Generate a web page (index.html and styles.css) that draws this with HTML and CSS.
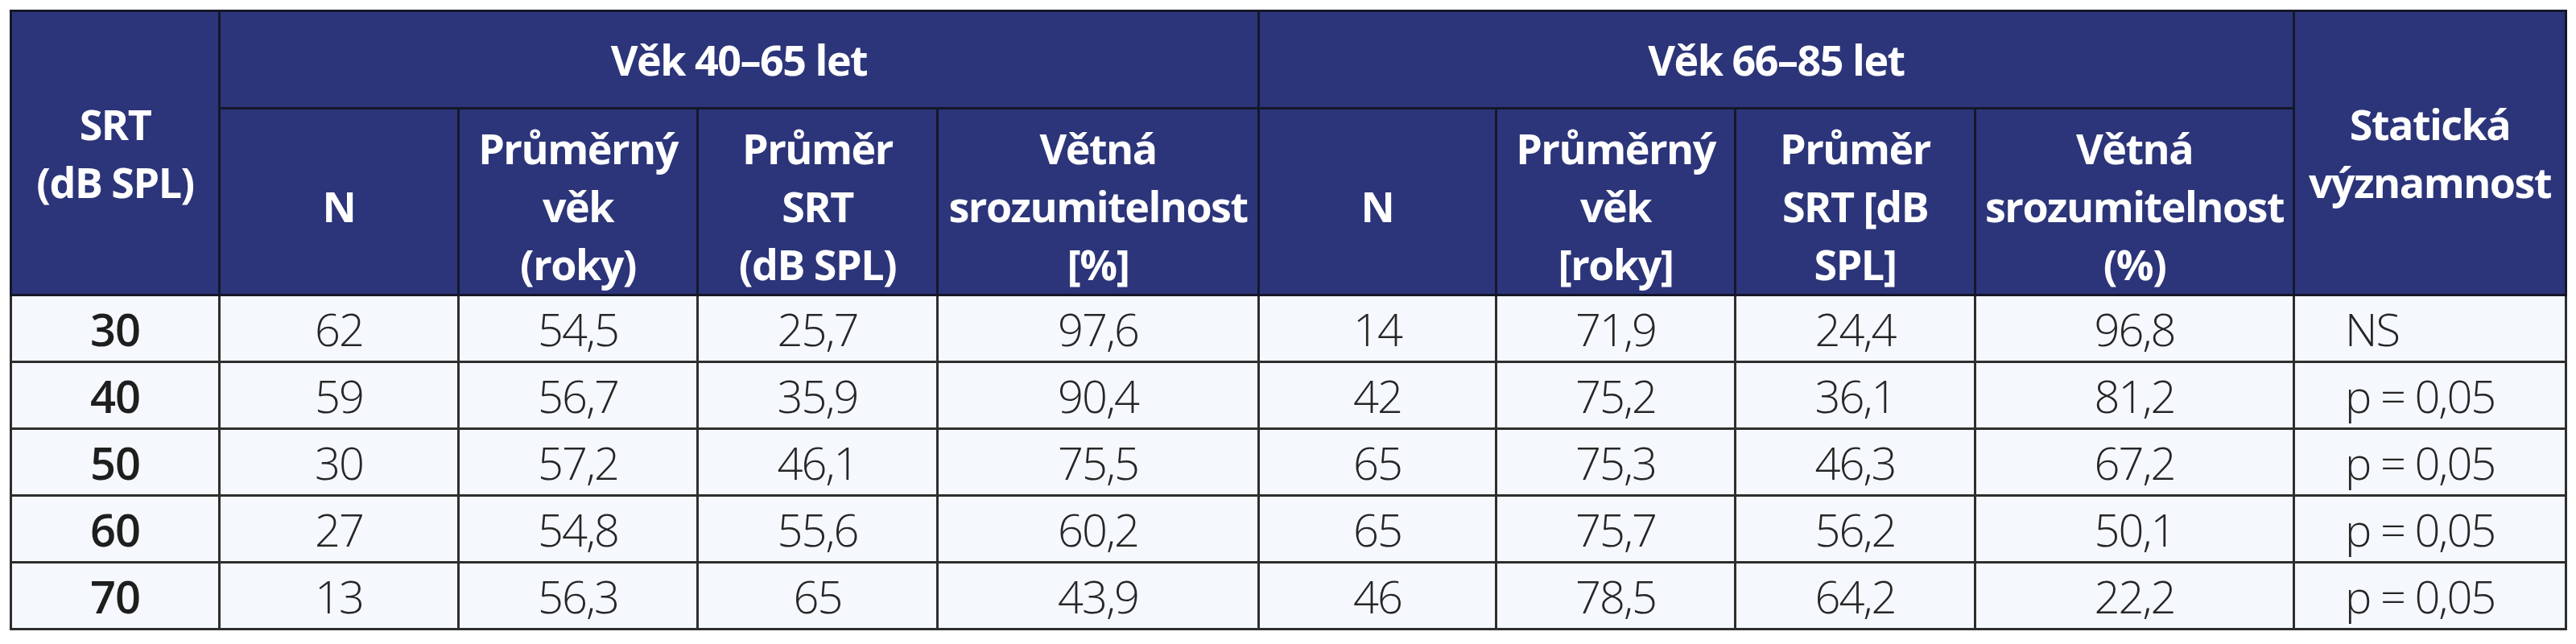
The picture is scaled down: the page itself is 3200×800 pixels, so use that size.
FILE: index.html
```html
<!DOCTYPE html>
<html lang="cs">
<head>
<meta charset="utf-8">
<title>SRT tabulka</title>
<link rel="stylesheet" href="styles.css">
</head>
<body>
<div class="wrap">
<table class="data">
  <colgroup>
    <col class="c-srt">
    <col class="c-n"><col class="c-pv"><col class="c-ps"><col class="c-vs">
    <col class="c-n2"><col class="c-pv"><col class="c-ps"><col class="c-vs2">
    <col class="c-st">
  </colgroup>
  <thead>
    <tr class="group-row">
      <th rowspan="2" class="h-two">SRT<br>(dB SPL)</th>
      <th colspan="4" class="h-group">Věk 40–65 let</th>
      <th colspan="4" class="h-group">Věk 66–85 let</th>
      <th rowspan="2" class="h-two">Statická<br>významnost</th>
    </tr>
    <tr class="sub-row">
      <th>N</th>
      <th>Průměrný<br>věk<br>(roky)</th>
      <th>Průměr<br>SRT<br>(dB SPL)</th>
      <th>Větná<br>srozumitelnost<br>[%]</th>
      <th>N</th>
      <th>Průměrný<br>věk<br>[roky]</th>
      <th>Průměr<br>SRT [dB<br>SPL]</th>
      <th>Větná<br>srozumitelnost<br>(%)</th>
    </tr>
  </thead>
  <tbody>
    <tr><td class="key">30</td><td>62</td><td>54,5</td><td>25,7</td><td>97,6</td><td>14</td><td>71,9</td><td>24,4</td><td>96,8</td><td class="sig">NS</td></tr>
    <tr><td class="key">40</td><td>59</td><td>56,7</td><td>35,9</td><td>90,4</td><td>42</td><td>75,2</td><td>36,1</td><td>81,2</td><td class="sig">p = 0,05</td></tr>
    <tr><td class="key">50</td><td>30</td><td>57,2</td><td>46,1</td><td>75,5</td><td>65</td><td>75,3</td><td>46,3</td><td>67,2</td><td class="sig">p = 0,05</td></tr>
    <tr><td class="key">60</td><td>27</td><td>54,8</td><td>55,6</td><td>60,2</td><td>65</td><td>75,7</td><td>56,2</td><td>50,1</td><td class="sig">p = 0,05</td></tr>
    <tr><td class="key">70</td><td>13</td><td>56,3</td><td>65</td><td>43,9</td><td>46</td><td>78,5</td><td>64,2</td><td>22,2</td><td class="sig">p = 0,05</td></tr>
  </tbody>
</table>
</div>
</body>
</html>
```
FILE: styles.css
```css
html, body {
  margin: 0;
  padding: 0;
  background: #ffffff;
}

.wrap {
  padding: 12px 0 0 12px;
}

.data {
  border-collapse: collapse;
  table-layout: fixed;
  width: 3175px;
  font-family: "Open Sans", "Liberation Sans", sans-serif;
}

.c-srt { width: 259px; }
.c-n { width: 297px; }
.c-pv { width: 297px; }
.c-ps { width: 298px; }
.c-vs { width: 399px; }
.c-n2 { width: 295px; }
.c-vs2 { width: 396px; }
.c-st { width: 338px; }

.data th {
  background: #2c3579;
  color: #ffffff;
  font-weight: 700;
  font-size: 52px;
  line-height: 72px;
  letter-spacing: -1.5px;
  text-align: center;
  vertical-align: middle;
  border: 3px solid #15172a;
  padding: 0 4px;
}

.group-row {
  height: 121px;
}

.sub-row {
  height: 232px;
}

.sub-row th {
  padding-top: 10px;
}

.data td {
  background: #f5f8fc;
  color: #262626;
  font-weight: 300;
  font-size: 56px;
  line-height: 60px;
  letter-spacing: -2px;
  text-align: center;
  vertical-align: middle;
  border: 3px solid #2e2e2e;
  height: 80px;
  padding: 0;
}

.data td.key {
  font-weight: 600;
  color: #1e1e1e;
  letter-spacing: -1px;
}

.data td.sig {
  text-align: left;
  padding-left: 62px;
}
```
